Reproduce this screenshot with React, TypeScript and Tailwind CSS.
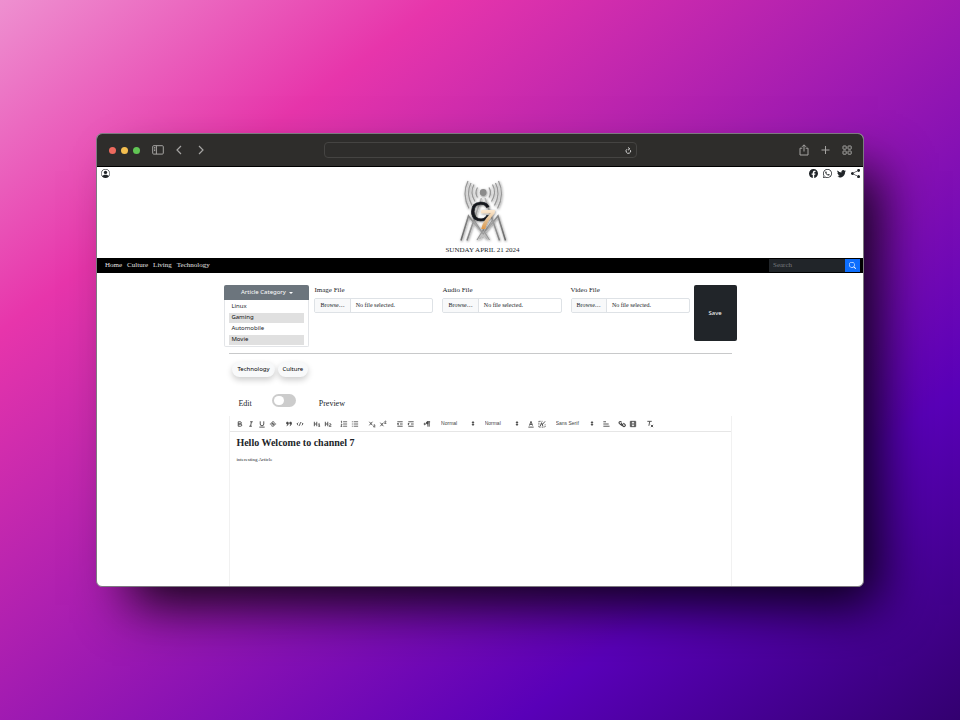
import React, { useState } from "react";
import {
  BsFacebook,
  BsPersonCircle,
  BsSearch,
  BsShareFill,
  BsTwitter,
  BsWhatsapp,
} from "react-icons/bs";

const serif = "font-['Liberation_Serif',serif]";
const noto = "font-['Noto_Sans',sans-serif]";

function TitleBar() {
  const line = { fill: "none", stroke: "#a5a4a2", strokeWidth: 1 };
  return (
    <div className="flex h-[33px] items-center justify-between border-b border-black bg-[#2e2d2b] pr-[11px] pl-3">
      <div className="flex flex-1 items-center">
        <div className="flex gap-[5px]">
          <span className="size-[7px] rounded-full bg-[#ed6a5e]" />
          <span className="size-[7px] rounded-full bg-[#f4be4f]" />
          <span className="size-[7px] rounded-full bg-[#61c554]" />
        </div>
        <button aria-label="Toggle sidebar" className="ml-3">
          <svg width="12" height="10" viewBox="0 0 12 10" {...line}>
            <rect x="0.7" y="0.7" width="10.6" height="8.4" rx="1" />
            <path d="M4.4 0.7v8.4M2 2.6h1.3M2 4.1h1.3M2 5.6h1.3" />
          </svg>
        </button>
        <button aria-label="Back" className="ml-3">
          <svg width="6" height="10" viewBox="0 0 6 10" {...line} strokeWidth={1.2}>
            <path d="M5 1L1 5l4 4" />
          </svg>
        </button>
        <button aria-label="Forward" className="ml-4">
          <svg width="6" height="10" viewBox="0 0 6 10" {...line} strokeWidth={1.2}>
            <path d="M1 1l4 4-4 4" />
          </svg>
        </button>
      </div>
      <div className="flex h-4 w-[42%] items-center rounded-[4px] border border-[#454442] pr-1">
        <input aria-label="Address" className="min-w-0 flex-1 bg-transparent text-[8px] text-white outline-none" />
        <button aria-label="Reload">
          <svg width="7" height="7" viewBox="0 0 7 7" fill="none" stroke="#e8e8e8" strokeWidth="0.9">
            <path d="M2 2.2A2.300 2.300 0 1 0 5.500 3.200M3 0.500L4.800 1.800L3 3.200" />
          </svg>
        </button>
      </div>
      <div className="flex flex-1 items-center justify-end gap-3">
        <button aria-label="Share">
          <svg width="10" height="12" viewBox="0 0 10 12" {...line}>
            <path d="M3.3 4.2H1v6.8h8V4.2H6.7M5 7.5V1M3 2.8l2-2 2 2" />
          </svg>
        </button>
        <button aria-label="New tab">
          <svg width="9" height="10" viewBox="0 0 9 10" {...line}>
            <path d="M4.5 1v8M0.5 5h8" />
          </svg>
        </button>
        <button aria-label="Tab overview">
          <svg width="10" height="10" viewBox="0 0 10 10" {...line}>
            <rect x="1" y="1" width="3.2" height="3.2" rx="0.4" />
            <rect x="6" y="1" width="3.2" height="3.2" rx="0.4" />
            <rect x="1" y="6" width="3.2" height="3.2" rx="0.4" />
            <rect x="6" y="6" width="3.2" height="3.2" rx="0.4" />
          </svg>
        </button>
      </div>
    </div>
  );
}

function Logo() {
  return (
    <svg width="54" height="64" viewBox="1 0 54 64" role="img" aria-label="Channel 7">
      <defs>
        <linearGradient id="steel" x1="0" y1="0" x2="1" y2="0">
          <stop offset="0" stopColor="#6a6a6a" />
          <stop offset="0.5" stopColor="#c2c2c2" />
          <stop offset="1" stopColor="#6a6a6a" />
        </linearGradient>
        <linearGradient id="gold" x1="0" y1="0" x2="0" y2="1">
          <stop offset="0.2" stopColor="#fbe6cc" />
          <stop offset="0.6" stopColor="#dfb27c" />
          <stop offset="1" stopColor="#e07a10" />
        </linearGradient>
        <filter id="drop" x="-20%" y="-20%" width="140%" height="140%">
          <feDropShadow dx="0.5" dy="0.8" stdDeviation="0.8" floodColor="#000" floodOpacity="0.5" />
        </filter>
      </defs>
      <g fill="none" stroke="#999" filter="url(#drop)">
        <circle cx="28.200" cy="13.500" r="3.400" fill="#8b8b8b" stroke="none" />
        <path d="M22.500 8.500Q19.500 13.500 22.500 18.500M34 8.500Q37 13.500 34 18.500M19 5.500Q14.500 13.500 20 22.500M37.500 5.500Q42 13.500 36.500 22.500M16 4Q10.500 14.500 17 26.500M40.500 4Q46 14.500 39.500 26.500M13 2Q6.500 15 14 29.500M43.500 2Q50 15 42.500 29.500" strokeWidth="1.300" />
        <path stroke="url(#steel)" strokeWidth="1.600" d="M6 61.500L13.500 37L32 60M50.500 61.500L43 37L24.500 60M12 61.500L26.500 19M44.500 61.500L30 19" />
        <path strokeWidth="1.200" d="M19 41L28.200 55L37.500 41M22 61L28.200 51L34.500 61" />
      </g>
      <g fontFamily="Liberation Sans, sans-serif" filter="url(#drop)">
        <text x="15" y="42" fontSize="28" fill="#14161c" stroke="#14161c" strokeWidth="0.6">C</text>
        <text x="24" y="50" fontSize="27" fontWeight="bold" fontStyle="italic" fill="url(#gold)">7</text>
      </g>
    </svg>
  );
}

function Masthead() {
  return (
    <header className="flex justify-between text-[#212529]">
      <div className="flex-1 p-1 pt-[2px]">
        <button aria-label="Account" className="block">
          <BsPersonCircle size={9} />
        </button>
      </div>
      <div className="flex flex-col items-center pt-3">
        <Logo />
        <time dateTime="2024-04-21" className="mt-[3px] block text-[7px] leading-[8px]">
          SUNDAY APRIL 21 2024
        </time>
      </div>
      <div className="flex flex-1 items-start justify-end gap-[5px] pt-[2px] pr-[3px]">
        <a href="#facebook" aria-label="Facebook"><BsFacebook size={9} /></a>
        <a href="#whatsapp" aria-label="WhatsApp"><BsWhatsapp size={9} /></a>
        <a href="#twitter" aria-label="Twitter"><BsTwitter size={9} /></a>
        <a href="#share" aria-label="Share"><BsShareFill size={9} /></a>
      </div>
    </header>
  );
}

function NavBar() {
  return (
    <nav className="mt-1 flex h-[15px] items-center justify-between bg-black pr-[3px] pl-2 text-[7px] leading-[15px] text-[#e4e4e4]">
      <div className="flex gap-[5px]">
        {["Home", "Culture", "Living", "Technology"].map((name) => (
          <a key={name} href={`#${name.toLowerCase()}`}>{name}</a>
        ))}
      </div>
      <form className="flex h-[13px]" onSubmit={(e) => e.preventDefault()}>
        <input
          type="search"
          aria-label="Search"
          placeholder="Search"
          className="w-[76px] bg-[#212529] px-1 text-white outline-none placeholder:text-[#777b7f]"
        />
        <button aria-label="Search" className="flex w-[15px] items-center justify-center bg-[#0d6efd] text-white">
          <BsSearch size={7} />
        </button>
      </form>
    </nav>
  );
}

function CategoryPicker() {
  return (
    <div className={`w-[85px] shrink-0 text-[6px] ${noto}`}>
      <button className="flex h-[15px] w-full items-center justify-center gap-[3px] rounded-t-[2px] bg-[#6c757d] text-white">
        Article Category
        <span className="border-x-2 border-t-2 border-x-transparent border-t-white" />
      </button>
      <div className="rounded-b-[2px] border border-t-0 border-[#e3e5e8] px-1 pt-[2px] pb-px">
        <select
          multiple
          size={4}
          aria-label="Article category"
          defaultValue={["Gaming", "Movie"]}
          className="block h-[43px] w-[75px] appearance-none overflow-hidden text-[6px] leading-[10px] text-[#212529] outline-none"
        >
          {["Linux", "Gaming", "Automobile", "Movie"].map((c) => (
            <option
              key={c}
              className="mb-px h-[10px] min-h-0 px-[2px] py-0 leading-[10px] checked:bg-[#e0e0e0] checked:bg-[linear-gradient(#e0e0e0,#e0e0e0)]"
            >
              {c}
            </option>
          ))}
        </select>
      </div>
    </div>
  );
}

function FileField({ id, label, accept }: { id: string; label: string; accept: string }) {
  return (
    <div>
      <label htmlFor={id} className="block text-[7px] leading-[10px]">{label}</label>
      <label className="relative mt-[3px] flex h-[15px] overflow-hidden rounded-[2px] border border-[#dee2e6] text-[6px] leading-[13px] whitespace-nowrap">
        <span className="border-r border-[#dee2e6] bg-[#f8f9fa] px-[5px]">Browse…</span>
        <span className="px-[5px]">No file selected.</span>
        <input id={id} type="file" accept={accept} className="sr-only" />
      </label>
    </div>
  );
}

function Chip({ children }: { children: string }) {
  return (
    <button className={`h-[15px] rounded-full bg-[#f8f9fa] px-[5px] text-[6px] leading-[15px] text-black shadow-[0_3px_6px_rgba(0,0,0,0.2)] ${noto}`}>
      {children}
    </button>
  );
}

function QuillIcon({ children }: { children: React.ReactNode }) {
  return (
    <svg width="8" height="8" viewBox="0 0 18 18" fill="none" stroke="#444" strokeWidth="2">
      {children}
    </svg>
  );
}

const H = "M3 4v10M8.500 4v10M3 9h5.500";

const icons: Record<string, React.ReactNode> = {
  Bold: <path d="M5 4h4.500a2.500 2.500 0 0 1 0 5H5zM5 9h5.500a2.500 2.500 0 0 1 0 5H5z" />,
  Italic: <path d="M7 4h6M5 14h6M8 14l2-10" />,
  Underline: <path d="M5 3v6a4 4 0 0 0 8 0V3M3 16h12" />,
  Strike: <path d="M2 9h14M12.500 5.500C11.500 3.500 6 3.500 6 6.500c0 2 6 2.500 6 5 0 3-6 3-7 .8" />,
  Quote: (
    <path fill="#444" d="M4 5h3v4H4zM11 5h3v4h-3zM7 8c0 3-1 4-3 5M14 8c0 3-1 4-3 5" />
  ),
  Code: <path d="M5 6L2 9l3 3M13 6l3 3-3 3M10.500 5l-3 8" />,
  "Heading 1": <><path d={H} /><path d="M12 9.500l2-1.500v6M12 14h4" /></>,
  "Heading 2": <><path d={H} /><path d="M11.500 9.500c1-2 4-1.500 4 .5 0 1.500-4 3-4 4h5" /></>,
  "Ordered list": <path strokeWidth="1.800" d="M7 4h9M7 9h9M7 14h9M2 3l1.500-.5v4M2 9.500h2.500L2 14.500h3" />,
  "Bullet list": <path strokeWidth="1.800" d="M6 4h10M6 9h10M6 14h10M2 4h2M2 9h2M2 14h2" />,
  Subscript: <path d="M3 4l7 8M10 4l-7 8M12.500 11.500c1-1.500 3.500-1 3 .5 0 1-3 2-3 3.500h4" />,
  Superscript: <path d="M3 6l7 8M10 6l-7 8M12.500 3.500c1-1.500 3.500-1 3 .5 0 1-3 2-3 3.500h4" />,
  Outdent: <path d="M3 14h12M3 4h12M9 9h6M5 7v4L3 9z" />,
  Indent: <path d="M3 14h12M3 4h12M9 9h6M3 7v4l2-2z" />,
  "Text direction": <><path d="M3 7l3 2-3 2z" /><path fill="#444" d="M11 4h-1a2 2 0 0 0 0 5h1z" /><path d="M11 3v12M14 3v12M10 4h6" /></>,
  "Text colour": <path d="M3 16h12M5.500 12.500L9 3l3.500 9.500M6.500 10h5" />,
  Highlight: <><path strokeDasharray="2 1.500" d="M2 16h14M2 3h8M2 3v13M16 10v6" /><path d="M5 14l3-8 3 8M9 11l7-8" /></>,
  Align: <path d="M3 9h12M3 14h14M3 4h6" />,
  Link: <path strokeWidth="2.500" d="M7 7l5 5M8 5.500L6.500 4A2.500 2.500 0 0 0 3 7.500L6 10.500M10 12.500l1.500 1.500a2.500 2.500 0 0 0 4-4L12 7M6 10l4 3" />,
  Video: <path d="M3 3h12v12H3zM6 3v12M12 3v12M6 9h6M3 6.500h2M3 11.500h2M13 6.500h2M13 11.500h2" />,
  "Clear format": <path d="M3 3h10M8.500 3L6.500 13M11 11l5 5M16 11l-5 5" />,
};

function Tools({ names }: { names: string[] }) {
  return (
    <div className="flex">
      {names.map((n) => (
        <button key={n} aria-label={n} className="flex h-[9px] w-[11px] items-center justify-center">
          <QuillIcon>{icons[n]}</QuillIcon>
        </button>
      ))}
    </div>
  );
}

function Picker({ label, options, width }: { label: string; options: string[]; width: string }) {
  return (
    <div className={`flex h-[9px] items-center ${width}`}>
      <select
        aria-label={label}
        className="h-[9px] min-w-0 flex-1 appearance-none bg-transparent pl-[3px] font-['Liberation_Sans',sans-serif] text-[5px] leading-[9px] font-medium text-[#444]"
      >
        {options.map((o) => <option key={o}>{o}</option>)}
      </select>
      <svg width="6" height="7" viewBox="0 0 18 18" fill="#333" stroke="#333" strokeWidth="2">
        <path d="M6 11l3 4 3-4zM6 7l3-4 3 4z" />
      </svg>
    </div>
  );
}

function Editor() {
  return (
    <section className="mx-[5px] flex min-h-[170px] flex-col border-x border-[#f1f1f1]">
      <div className="flex h-4 items-center border-b border-[#e6e6e6] px-1">
        <div className="flex w-full max-w-[421px] justify-between">
          <Tools names={["Bold", "Italic", "Underline", "Strike"]} />
          <Tools names={["Quote", "Code"]} />
          <Tools names={["Heading 1", "Heading 2"]} />
          <Tools names={["Ordered list", "Bullet list"]} />
          <Tools names={["Subscript", "Superscript"]} />
          <Tools names={["Outdent", "Indent"]} />
          <Tools names={["Text direction"]} />
          <Picker label="Size" options={["Normal", "Small", "Large", "Huge"]} width="w-[38px]" />
          <Picker label="Heading" options={["Normal", "Heading 1", "Heading 2"]} width="w-[38px]" />
          <Tools names={["Text colour", "Highlight"]} />
          <Picker label="Font" options={["Sans Serif", "Serif", "Monospace"]} width="w-[42px]" />
          <Tools names={["Align"]} />
          <Tools names={["Link", "Video"]} />
          <Tools names={["Clear format"]} />
        </div>
      </div>
      <div className="flex-1 px-[6px] pt-[5px] outline-none" contentEditable suppressContentEditableWarning>
        <h1 className="text-[10px] leading-[12px] font-bold">Hello Welcome to channel 7</h1>
        <p className="mt-2 text-[5px] leading-[6px]">interesting Article</p>
      </div>
    </section>
  );
}

function ModeSwitch() {
  const [preview, setPreview] = useState(false);
  return (
    <div className="mt-[17px] flex px-[14px] text-[8px] leading-[10px]">
      <span className="mt-[5px]">Edit</span>
      <label className="relative ml-5 flex h-[13px] w-6 rounded-full bg-[#ccc] p-[2px] has-checked:bg-[#2196f3]">
        <input
          type="checkbox"
          aria-label="Preview"
          className="peer sr-only"
          checked={preview}
          onChange={(e) => setPreview(e.target.checked)}
        />
        <span className="h-[9px] w-[10px] rounded-full bg-white peer-checked:ml-auto" />
      </label>
      <span className="mt-[5px] ml-[23px]">Preview</span>
    </div>
  );
}

export default function App() {
  return (
    <div className={`flex min-h-screen items-center justify-center bg-[linear-gradient(to_bottom_right,#ee90d0_0%,#e735ab_23%,#5900b8_77%,#330070_100%)] ${serif}`}>
      <div className="w-4/5 overflow-hidden rounded-[6px] border border-[#7d7a80] bg-white text-[#212529] shadow-[24px_28px_50px_-10px_rgba(0,0,0,0.9)]">
        <TitleBar />
        <Masthead />
        <NavBar />
        <main className="mx-auto w-[67%] pt-3 pl-px">
          <div className="flex items-start">
            <CategoryPicker />
            <div className="mr-1 ml-[5px] grid flex-1 grid-cols-3 gap-[9px]">
              <FileField id="image" label="Image File" accept="image/*" />
              <FileField id="audio" label="Audio File" accept="audio/*" />
              <FileField id="video" label="Video File" accept="video/*" />
            </div>
            <button className={`h-14 w-[43px] rounded-[2px] bg-[#212529] text-[6px] text-white ${noto}`}>Save</button>
          </div>
          <hr className="mx-[5px] mt-[6px] border-[#c8c9ca]" />
          <div className="mt-2 flex gap-[3px] px-2">
            <Chip>Technology</Chip>
            <Chip>Culture</Chip>
          </div>
          <ModeSwitch />
          <div className="mt-[7px]">
            <Editor />
          </div>
        </main>
      </div>
    </div>
  );
}
